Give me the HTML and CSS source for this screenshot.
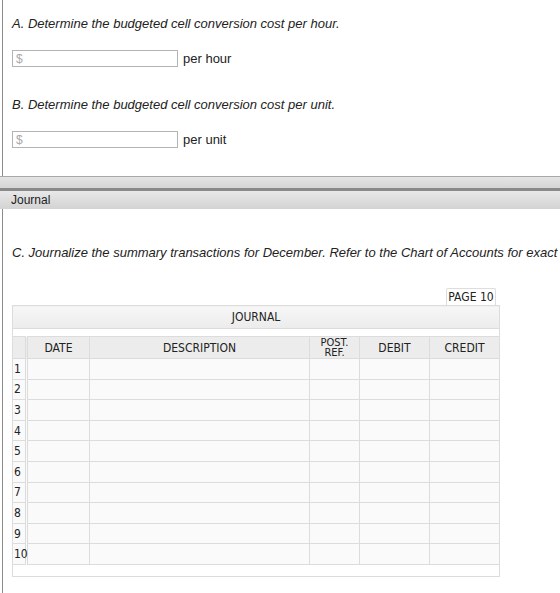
FILE: index.html
```html
<!DOCTYPE html>
<html lang="en">
  <head>
    <meta charset="UTF-8" />
    <meta name="viewport" content="width=device-width, initial-scale=1.0" />
    <title>Cell Conversion Cost - Journal</title>
    <link rel="stylesheet" href="styles.css">
  </head>
  <body>
    <section class="panel panel-top">
      <div class="question">
        <p class="prompt">A. Determine the budgeted cell conversion cost per hour.</p>
        <div class="answer">
          <input type="text" class="money" placeholder="$" />
          <span class="unit">per hour</span>
        </div>
      </div>

      <div class="question">
        <p class="prompt">B. Determine the budgeted cell conversion cost per unit.</p>
        <div class="answer">
          <input type="text" class="money" placeholder="$" />
          <span class="unit">per unit</span>
        </div>
      </div>
    </section>

    <div class="tabbar">
      <div class="tabbar-strip"></div>
      <div class="tabbar-title">Journal</div>
    </div>

    <section class="panel panel-bottom">
      <p class="prompt prompt-wide">C. Journalize the summary transactions for December. Refer to the Chart of Accounts for exact wording of account titles.</p>

      <div class="journal">
        <div class="page-no">PAGE 10</div>
        <table class="journal-table">
          <colgroup>
            <col class="c-num" />
            <col class="c-date" />
            <col class="c-desc" />
            <col class="c-ref" />
            <col class="c-debit" />
            <col class="c-credit" />
          </colgroup>
          <thead>
            <tr class="title-row"><th colspan="6">JOURNAL</th></tr>
            <tr class="gap-row"><td colspan="6"></td></tr>
            <tr class="head-row">
              <th class="num"></th>
              <th>DATE</th>
              <th>DESCRIPTION</th>
              <th class="ref">POST.<br />REF.</th>
              <th>DEBIT</th>
              <th>CREDIT</th>
            </tr>
          </thead>
          <tbody id="rows"></tbody>
          <tfoot>
            <tr class="gap-row foot"><td colspan="6"></td></tr>
          </tfoot>
        </table>
      </div>
    </section>

    <script>
      // build the ten empty journal lines
      const body = document.getElementById('rows')
      for (let i = 1; i <= 10; i++) {
        const tr = document.createElement('tr')
        tr.innerHTML = '<td class="num">' + i + '</td><td></td><td></td><td></td><td></td><td></td>'
        body.appendChild(tr)
      }
    </script>
  </body>
</html>
```

FILE: styles.css
```css
* {
  margin: 0;
  padding: 0;
  box-sizing: border-box;
}

body {
  font-family: 'Liberation Sans', Arial, sans-serif;
  font-size: 13px;
  color: #222;
  background: #fff;
  overflow: hidden;
}

.panel {
  margin-left: 2px;
  border-left: 1px solid #8c8c8c;
  padding-left: 9px;
}

.panel-top {
  height: 176px;
  padding-top: 16px;
}

.panel-bottom {
  height: 384px;
  padding-top: 36px;
}

.prompt {
  font-style: italic;
  font-size: 13px;
  line-height: 15px;
  color: #222;
}

.prompt-wide {
  white-space: nowrap;
}

.question {
  margin-bottom: 30px;
}

.answer {
  display: flex;
  align-items: center;
  gap: 5px;
  margin-top: 19px;
}

.money {
  width: 166px;
  height: 17px;
  border: 1px solid #b4b4b4;
  padding: 0 3px;
  font-family: 'Liberation Sans', Arial, sans-serif;
  font-size: 12px;
  outline: none;
}

.money::placeholder {
  color: #aaa;
}

.unit {
  font-size: 13px;
}

/* grey tab strip between the two parts */
.tabbar {
  border-top: 1px solid #a9a9a9;
}

.tabbar-strip {
  height: 14px;
  background: linear-gradient(#e4e4e4, #d6d6d6);
  border-bottom: 3px solid #8a8a8a;
}

.tabbar-title {
  height: 18px;
  line-height: 18px;
  padding-left: 11px;
  font-size: 12px;
  color: #222;
  background: linear-gradient(#e8e8e8, #d3d3d3);
}

/* journal grid */
.journal {
  width: 487px;
  margin-top: 28px;
  font-family: 'DejaVu Sans Condensed', 'DejaVu Sans', sans-serif;
  font-size: 12px;
  color: #222;
}

.page-no {
  width: 50px;
  height: 17px;
  margin-left: auto;
  margin-right: 3px;
  border: 1px solid #ddd;
  border-bottom: none;
  border-radius: 2px 2px 0 0;
  text-align: center;
  line-height: 17px;
  font-size: 12px;
}

.journal-table {
  width: 100%;
  table-layout: fixed;
  border-collapse: collapse;
  border: 1px solid #d4d4d4;
}

.c-num { width: 14px; }
.c-date { width: 63px; }
.c-desc { width: 220px; }
.c-ref { width: 50px; }
.c-debit { width: 70px; }
.c-credit { width: 70px; }

.journal-table th,
.journal-table td {
  border: 1px solid #dcdcdc;
  font-weight: normal;
  padding: 0;
}

.title-row th {
  height: 23px;
  text-align: center;
  background: linear-gradient(#f7f7f7, #ececec);
  border-bottom: 1px solid #dcdcdc;
}

.gap-row td {
  height: 8px;
  background: #fff;
}

.gap-row.foot td {
  height: 12px;
}

.head-row th {
  height: 22px;
  text-align: center;
  background: #ececec;
}

.head-row th.num {
  border-right: 3px double #dcdcdc;
}

.head-row th.ref {
  font-size: 11px;
  line-height: 10px;
}

tbody td {
  height: 20.6px;
  background: #fafafa;
}

tbody td.num {
  border-right: 3px double #dcdcdc;
  padding-left: 1px;
  overflow: visible;
  white-space: nowrap;
}
```
